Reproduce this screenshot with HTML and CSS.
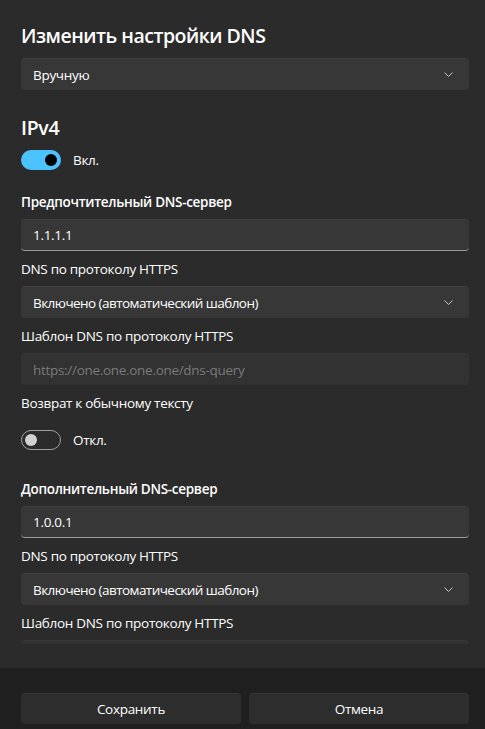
FILE: index.html
```html
<!DOCTYPE html>
<html lang="ru">
<head>
<meta charset="utf-8">
<link rel="stylesheet" href="styles.css">
</head>
<body>
<div class="dialog">
  <div class="body">
    <div class="scroll">
      <h1 class="title">Изменить настройки DNS</h1>
      <div class="select"><span>Вручную</span><svg class="chev" width="9" height="5" viewBox="0 0 9 5"><path d="M0.5 0.5l4 4 4-4" fill="none" stroke="#c8c8c8" stroke-width="1"/></svg></div>

      <h2 class="section">IPv4</h2>
      <div class="toggle-row"><span class="toggle on"><span class="knob"></span></span><span class="tlabel">Вкл.</span></div>

      <div class="field first">
        <div class="label strong">Предпочтительный DNS-сервер</div>
        <div class="input"><span>1.1.1.1</span></div>
      </div>
      <div class="field">
        <div class="label">DNS по протоколу HTTPS</div>
        <div class="select"><span class="tight">Включено (автоматический шаблон)</span><svg class="chev" width="9" height="5" viewBox="0 0 9 5"><path d="M0.5 0.5l4 4 4-4" fill="none" stroke="#c8c8c8" stroke-width="1"/></svg></div>
      </div>
      <div class="field">
        <div class="label">Шаблон DNS по протоколу HTTPS</div>
        <div class="input disabled"><span>https://one.one.one.one/dns-query</span></div>
      </div>
      <div class="field">
        <div class="label last">Возврат к обычному тексту</div>
      </div>
      <div class="toggle-row off-row"><span class="toggle off"><span class="knob"></span></span><span class="tlabel">Откл.</span></div>

      <div class="field second">
        <div class="label strong">Дополнительный DNS-сервер</div>
        <div class="input"><span>1.0.0.1</span></div>
      </div>
      <div class="field">
        <div class="label">DNS по протоколу HTTPS</div>
        <div class="select"><span class="tight">Включено (автоматический шаблон)</span><svg class="chev" width="9" height="5" viewBox="0 0 9 5"><path d="M0.5 0.5l4 4 4-4" fill="none" stroke="#c8c8c8" stroke-width="1"/></svg></div>
      </div>
      <div class="field">
        <div class="label">Шаблон DNS по протоколу HTTPS</div>
        <div class="input disabled"></div>
      </div>
    </div>
  </div>
  <div class="footer">
    <button class="btn">Сохранить</button>
    <button class="btn">Отмена</button>
  </div>
</div>
</body>
</html>
```
FILE: styles.css
```css
* { box-sizing: border-box; margin: 0; padding: 0; }
html, body { background: #2b2b2b; }
body {
  font-family: "Open Sans", "Noto Sans", sans-serif;
  font-size: 13.5px;
  letter-spacing: -0.3px;
  color: #ffffff;
  width: 485px;
  height: 729px;
  overflow: hidden;
}
.dialog { display: flex; flex-direction: column; height: 729px; }
.body { height: 668px; padding-bottom: 24px; }
.scroll {
  height: 100%;
  overflow: hidden;
  padding: 22px 16px 0 21px;
}
.title {
  font-size: 19.5px;
  font-weight: 600;
  line-height: 28px;
  margin-bottom: 8px;
  letter-spacing: -0.5px;
}
.select, .input {
  height: 32px;
  border-radius: 4px;
  background: #373737;
  border-top: 1px solid #3f3f3f;
  display: flex;
  align-items: center;
  justify-content: space-between;
  padding: 0 16px 0 12px;
  line-height: 20px;
}
.tight { letter-spacing: -0.55px; }
.input { border-bottom: 1px solid #9a9a9a; }
.input.disabled {
  background: #323232;
  border-bottom: none;
  border-top: 1px solid #363636;
  color: #7a7a7a;
}
.chev { display: block; }
.section {
  font-size: 19.5px;
  font-weight: 600;
  line-height: 28px;
  margin-top: 24px;
  margin-bottom: 8px;
  letter-spacing: -0.3px;
}
.toggle-row { display: flex; align-items: center; gap: 12px; height: 20px; }
.toggle {
  width: 40px;
  height: 20px;
  border-radius: 10px;
  display: flex;
  align-items: center;
  padding: 0 4px;
}
.toggle .knob { width: 12px; height: 12px; border-radius: 50%; display: block; }
.toggle.on { background: #4cc2ff; justify-content: flex-end; }
.toggle.on .knob { background: #000; }
.toggle.off { border: 1px solid #a0a0a0; padding: 0 3px; }
.toggle.off .knob { background: #d0d0d0; }
.tlabel { line-height: 20px; }
.field { margin-top: 8px; }
.field.first { margin-top: 22px; }
.field.second { margin-top: 29px; }
.label { line-height: 20px; margin-bottom: 7px; }
.label.last { margin-bottom: 0; }
.label.strong { font-weight: 600; }
.off-row { margin-top: 17px; }
.footer {
  flex: 1;
  background: #202020;
  display: grid;
  grid-template-columns: 1fr 1fr;
  gap: 8px;
  padding: 25px 16px 0 21px;
}
.btn {
  height: 31px;
  border: none;
  border-top: 1px solid #353535;
  border-radius: 4px;
  background: #2d2d2d;
  color: #fff;
  font-family: inherit;
  font-size: 13.5px;
  letter-spacing: -0.3px;
}
```
